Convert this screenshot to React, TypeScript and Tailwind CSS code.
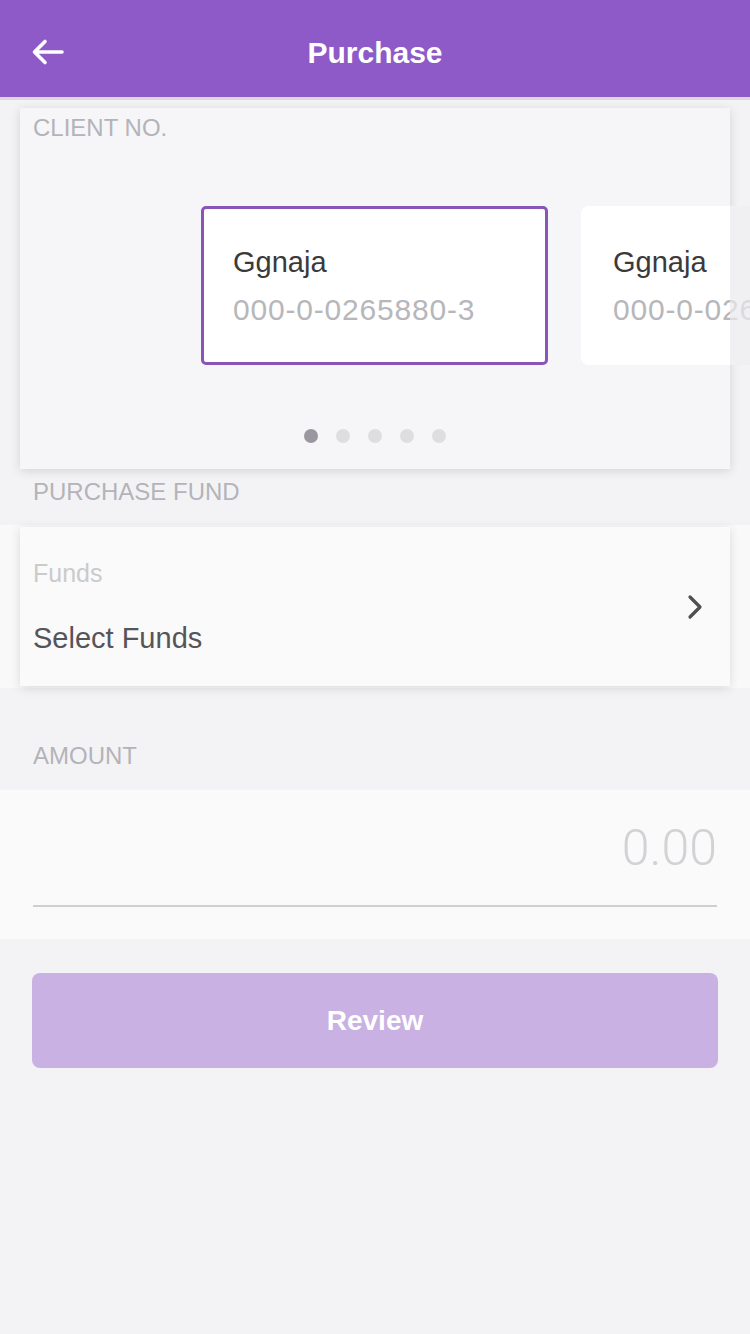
const font = { fontFamily: '"Liberation Sans", Arial, sans-serif' };

function BackArrow() {
  return (
    <svg width="34" height="28" viewBox="0 0 34 28" fill="none">
      <path
        d="M31 14H4M14 3.5L3.5 14L14 24.5"
        stroke="white"
        strokeWidth="3.6"
        strokeLinecap="round"
        strokeLinejoin="round"
      />
    </svg>
  );
}

function Chevron() {
  return (
    <svg width="16" height="26" viewBox="0 0 16 26" fill="none">
      <path
        d="M3 3L13 13L3 23"
        stroke="#4f4f52"
        strokeWidth="3.2"
        strokeLinecap="round"
        strokeLinejoin="round"
      />
    </svg>
  );
}

interface ClientProps {
  name: string;
  number: string;
  active?: boolean;
}

function ClientCard({ name, number, active }: ClientProps) {
  return (
    <div
      className={`shrink-0 w-[347px] h-[159px] bg-white flex flex-col justify-center ${
        active ? "border-[3px] border-[#8a55b8] rounded-[5px] pl-[29px]" : "pl-[32px] rounded-[8px]"
      }`}
    >
      <p className="text-[29px] leading-[34px] text-[#3a3a3c]">{name}</p>
      <p className="text-[30px] leading-[34px] mt-[14px] text-[#b7b7bb] tracking-[0.8px] whitespace-nowrap">
        {number}
      </p>
    </div>
  );
}

export default function App() {
  const dots = [0, 1, 2, 3, 4];
  return (
    <div
      className="w-[750px] min-h-[1334px] bg-[#f3f3f6] overflow-hidden relative"
      style={font}
    >
      <div className="absolute top-0 right-[20px] w-[42px] h-[3px] bg-white/60 rounded-b-sm" />
      <header className="h-[97px] bg-[#8e5ac8] flex items-center relative">
        <div className="absolute left-[31px] top-[38px]">
          <BackArrow />
        </div>
        <h1 className="w-full text-center text-white text-[30px] font-bold leading-[36px] mt-[8px]">
          Purchase
        </h1>
      </header>
      <div className="h-[3px] bg-[#dcd8e2]" />

      <section className="mx-[20px] mt-[8px] bg-[#f6f6f8] shadow-[0_2px_10px_rgba(0,0,0,0.13)] pt-[6px] pb-[26px] relative">
        <p className="pl-[13px] text-[24px] leading-[28px] text-[#b4b3b9]">CLIENT NO.</p>
        <div className="mt-[64px] flex gap-[33px] pl-[181px]">
          <ClientCard name="Ggnaja" number="000-0-0265880-3" active />
          <ClientCard name="Ggnaja" number="000-0-0265880-3" />
        </div>
        <div className="absolute right-[-22px] top-[98px] w-[22px] h-[159px] bg-[#e9e9ec]/70" />
        <div className="mt-[64px] flex justify-center gap-[18px]">
          {dots.map((d) => (
            <span
              key={d}
              className={`w-[14px] h-[14px] rounded-full ${d === 0 ? "bg-[#9a97a0]" : "bg-[#dedede]"}`}
            />
          ))}
        </div>
      </section>

      <p className="mt-[9px] pl-[33px] text-[24px] leading-[28px] text-[#b4b3b9]">PURCHASE FUND</p>

      <div className="mt-[19px] bg-[#f9f9f9] py-[2px]">
        <div className="mx-[20px] h-[159px] bg-[#fafafa] shadow-[0_2px_10px_rgba(0,0,0,0.13)] flex items-center justify-between pl-[13px] pr-[27px]">
          <div className="flex flex-col">
            <p className="text-[25px] leading-[30px] text-[#cbcbcb]">Funds</p>
            <p className="mt-[33px] text-[29px] leading-[34px] text-[#555558]">Select Funds</p>
          </div>
          <Chevron />
        </div>
      </div>

      <p className="mt-[54px] pl-[33px] text-[24px] leading-[28px] text-[#b4b3b9]">AMOUNT</p>

      <div className="mt-[20px] bg-[#fafafa] px-[33px] pt-[30px] pb-[32px]">
        <p
          className="text-right text-[50px] leading-[56px] font-light text-[#d2d2d6]"
          style={{ fontFamily: 'Roboto, "Liberation Sans", sans-serif' }}
        >
          0.00
        </p>
        <div className="mt-[29px] h-[2px] bg-[#cfcfcf]" />
      </div>

      <button className="mt-[34px] mx-[32px] w-[686px] h-[95px] rounded-[8px] bg-[#c9b1e3] text-white text-[28px] font-bold">
        Review
      </button>
    </div>
  );
}
